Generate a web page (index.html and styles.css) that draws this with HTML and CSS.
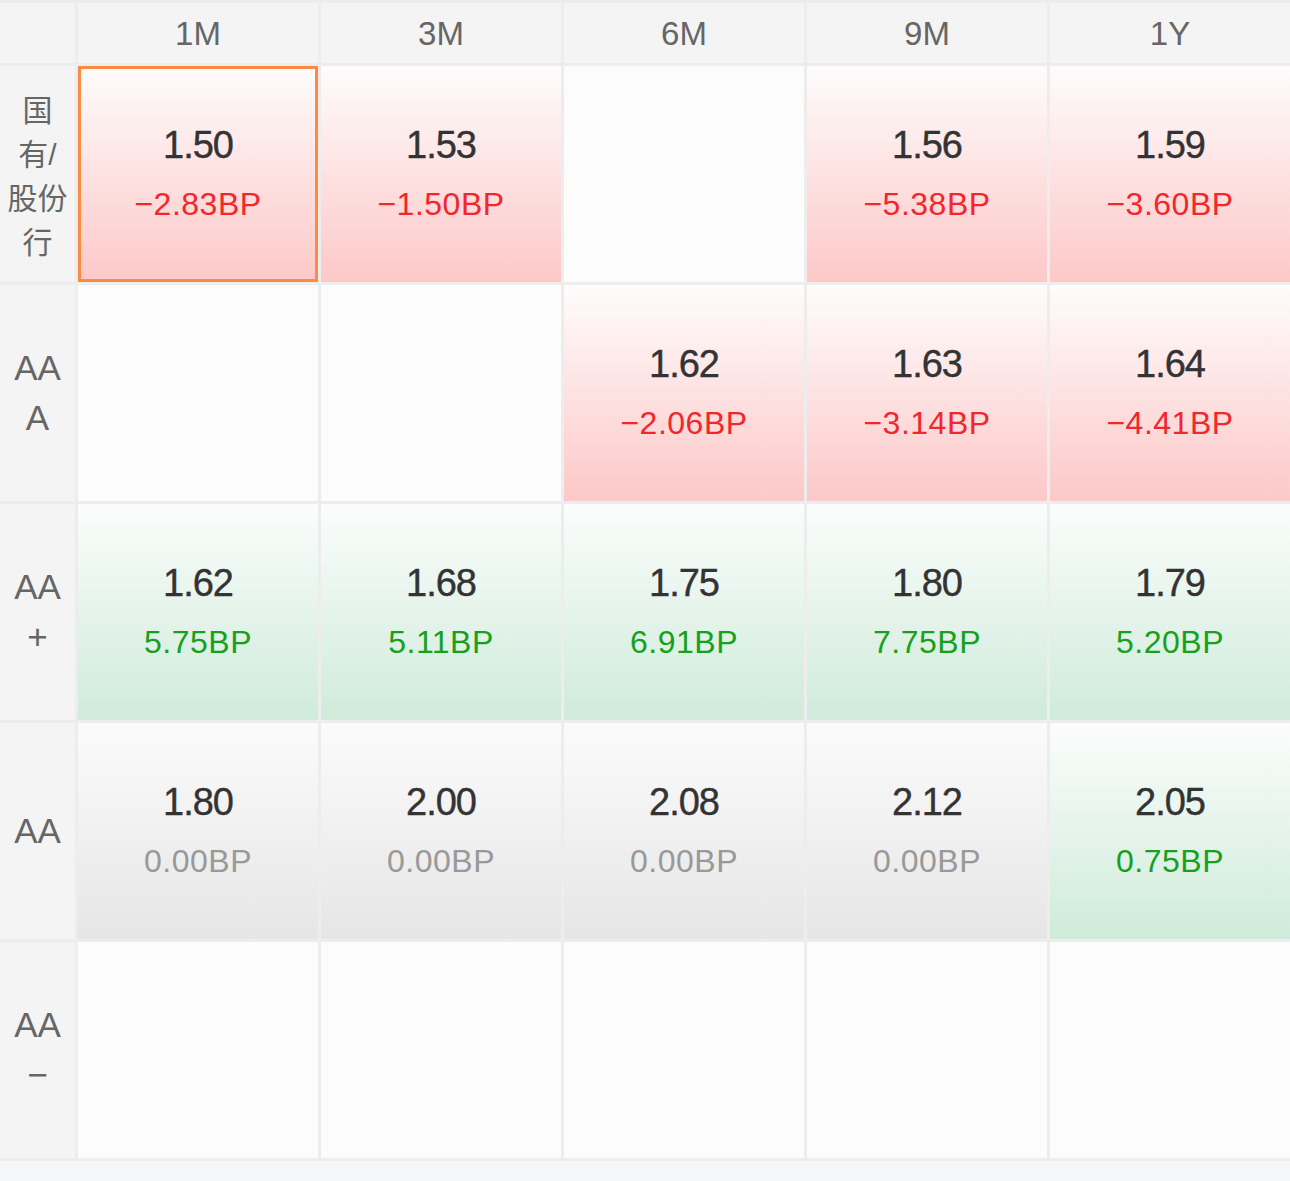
FILE: index.html
```
<!DOCTYPE html>
<html lang="zh-CN">
<head>
<meta charset="utf-8">
<title>收益率矩阵</title>
<link rel="stylesheet" href="styles.css">
</head>
<body>
<div class="matrix">
  <div class="head corner"></div>
  <div class="head">1M</div>
  <div class="head">3M</div>
  <div class="head">6M</div>
  <div class="head">9M</div>
  <div class="head">1Y</div>

  <div class="label label-cjk">国有/股份行</div>
  <div class="cell down selected"><div class="val">1.50</div><div class="bp">−2.83BP</div></div>
  <div class="cell down"><div class="val">1.53</div><div class="bp">−1.50BP</div></div>
  <div class="cell empty"></div>
  <div class="cell down"><div class="val">1.56</div><div class="bp">−5.38BP</div></div>
  <div class="cell down"><div class="val">1.59</div><div class="bp">−3.60BP</div></div>

  <div class="label">AAA</div>
  <div class="cell empty"></div>
  <div class="cell empty"></div>
  <div class="cell down"><div class="val">1.62</div><div class="bp">−2.06BP</div></div>
  <div class="cell down"><div class="val">1.63</div><div class="bp">−3.14BP</div></div>
  <div class="cell down"><div class="val">1.64</div><div class="bp">−4.41BP</div></div>

  <div class="label">AA+</div>
  <div class="cell up"><div class="val">1.62</div><div class="bp">5.75BP</div></div>
  <div class="cell up"><div class="val">1.68</div><div class="bp">5.11BP</div></div>
  <div class="cell up"><div class="val">1.75</div><div class="bp">6.91BP</div></div>
  <div class="cell up"><div class="val">1.80</div><div class="bp">7.75BP</div></div>
  <div class="cell up"><div class="val">1.79</div><div class="bp">5.20BP</div></div>

  <div class="label">AA</div>
  <div class="cell flat"><div class="val">1.80</div><div class="bp">0.00BP</div></div>
  <div class="cell flat"><div class="val">2.00</div><div class="bp">0.00BP</div></div>
  <div class="cell flat"><div class="val">2.08</div><div class="bp">0.00BP</div></div>
  <div class="cell flat"><div class="val">2.12</div><div class="bp">0.00BP</div></div>
  <div class="cell up"><div class="val">2.05</div><div class="bp">0.75BP</div></div>

  <div class="label">AA−</div>
  <div class="cell empty"></div>
  <div class="cell empty"></div>
  <div class="cell empty"></div>
  <div class="cell empty"></div>
  <div class="cell empty"></div>
</div>
</body>
</html>
```
FILE: styles.css
```
html, body {
  margin: 0;
  padding: 0;
  background: #f5f6f8;
}

body {
  font-family: "Liberation Sans", "Noto Sans CJK SC", sans-serif;
}

.matrix {
  display: grid;
  grid-template-columns: 75px repeat(5, 240px);
  grid-template-rows: 60px repeat(5, 216px);
  gap: 3px;
  padding: 3px 0;
  background: #ededed;
  width: 1290px;
}

.head {
  background: #f4f4f4;
  color: #666;
  font-size: 33px;
  padding-top: 2px;
  display: flex;
  align-items: center;
  justify-content: center;
}

.label {
  background: #f4f4f4;
  color: #666;
  font-size: 35px;
  line-height: 50px;
  display: flex;
  align-items: center;
  justify-content: center;
  text-align: center;
  padding: 0 7px;
  word-break: break-all;
}

.label-cjk {
  font-size: 30px;
  line-height: 44px;
  padding: 5px 6px 0;
}

.cell {
  display: flex;
  flex-direction: column;
  align-items: center;
  justify-content: center;
  padding-bottom: 4px;
  background: #fcfcfc;
}

.cell.selected {
  box-shadow: inset 0 0 0 3px #fb8b43;
}

.down {
  background: linear-gradient(to bottom, #fefcfc 0%, #fdc8c8 100%);
}

.up {
  background: linear-gradient(to bottom, #fbfdfc 0%, #cfebda 100%);
}

.flat {
  background: linear-gradient(to bottom, #fbfbfb 0%, #e6e6e6 100%);
}

.val {
  font-size: 38px;
  line-height: 64px;
  height: 64px;
  color: #333;
  letter-spacing: -1px;
  -webkit-text-stroke: 0.4px #333;
}

.bp {
  font-size: 32px;
  line-height: 54px;
  height: 54px;
  letter-spacing: 0.5px;
}

.down .bp {
  color: #f2262b;
}

.up .bp {
  color: #17a01c;
}

.flat .bp {
  color: #999;
}
```
